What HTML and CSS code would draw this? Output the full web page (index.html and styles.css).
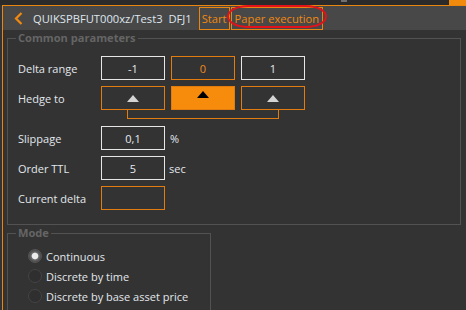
FILE: index.html
```html
<!DOCTYPE html>
<html>
<head>
<meta charset="utf-8">
<link rel="stylesheet" href="styles.css">
</head>
<body>
<div class="strip"><span class="nub"></span><span class="corner"></span></div>
<div class="window">
  <header class="bar">
    <svg class="back" width="9" height="13" viewBox="0 0 9 13"><polyline points="7.5,1 2,6.5 7.5,12" fill="none" stroke="#f0890f" stroke-width="2.2"/></svg>
    <span class="title">QUIKSPBFUT000xz/Test3&nbsp; DFJ1</span>
    <span class="tab tab-start">Start</span>
    <span class="tab tab-paper">Paper execution</span>
    <span class="ring"></span>
  </header>
  <div class="content">
    <fieldset class="group common">
      <legend>Common parameters</legend>
      <div class="rows">
        <div class="row">
          <span class="label">Delta range</span>
          <div class="fields">
            <span class="field">-1</span>
            <span class="field field-orange">0</span>
            <span class="field">1</span>
          </div>
        </div>
        <div class="hedge">
          <div class="row">
            <span class="label">Hedge to</span>
            <div class="fields">
              <span class="field field-frame"><span class="tri"></span></span>
              <span class="field field-fill"><span class="tri tri-dark"></span></span>
              <span class="field field-frame"><span class="tri"></span></span>
            </div>
          </div>
          <div class="bracket"></div>
        </div>
        <div class="row">
          <span class="label">Slippage</span>
          <span class="field">0,1</span>
          <span class="unit">%</span>
        </div>
        <div class="row">
          <span class="label">Order TTL</span>
          <span class="field">5</span>
          <span class="unit unit-sec">sec</span>
        </div>
        <div class="row">
          <span class="label">Current delta</span>
          <span class="field field-frame"></span>
        </div>
      </div>
    </fieldset>
    <fieldset class="group mode">
      <legend>Mode</legend>
      <div class="options">
        <div class="option"><span class="radio radio-on"></span>Continuous</div>
        <div class="option"><span class="radio"></span>Discrete by time</div>
        <div class="option"><span class="radio"></span>Discrete by base asset price</div>
      </div>
    </fieldset>
  </div>
</div>
</body>
</html>
```
FILE: styles.css
```css
html, body {
  margin: 0;
  padding: 0;
}
body {
  background: #333333;
  width: 466px;
  height: 310px;
  overflow: hidden;
  font-family: "Open Sans", "Noto Sans", sans-serif;
  font-size: 11px;
  color: #e2e7ec;
}
.strip {
  height: 5px;
  background: #2b2b2b;
  display: flex;
}
.nub {
  margin-left: 341px;
  width: 6px;
  height: 2px;
  background: #707070;
}
.corner {
  margin-left: auto;
  width: 17px;
  background: #f28b0c;
}
.window {
  margin-left: 2px;
  border-left: 1px solid #e8860f;
  border-top: 1px solid #e8860f;
  height: 304px;
}
.bar {
  position: relative;
  height: 24px;
  background: #484848;
  display: flex;
  align-items: center;
  padding-left: 11px;
}
.back {
  display: block;
  margin-top: 1px;
}
.title {
  margin-left: 10px;
  font-size: 11.2px;
  color: #dfe6ee;
}
.tab {
  align-self: flex-end;
  height: 23px;
  box-sizing: border-box;
  border: 1px solid #e8860f;
  color: #f0890f;
  font-size: 11.2px;
  display: flex;
  align-items: center;
  padding: 0 2px;
}
.tab-start {
  margin-left: 7px;
}
.tab-paper {
  margin-left: 1px;
  padding: 0 3px;
}
.ring {
  position: absolute;
  left: 224px;
  top: -1px;
  width: 100px;
  height: 23px;
  box-sizing: border-box;
  border: 2px solid #e3121a;
  border-radius: 22px / 12px;
}
.content {
  margin: 0 5px 0 4px;
}
.group {
  margin: 0;
  border: 1px solid #525252;
  padding: 0;
  min-width: 0;
}
.group legend {
  margin-left: 8px;
  padding: 0 2px;
  line-height: 16px;
  font-size: 11.1px;
  font-weight: 700;
  color: #656565;
}
.rows {
  display: flex;
  flex-direction: column;
  gap: 6px;
  padding: 10px 0 14px 10px;
}
.row {
  display: flex;
  align-items: center;
  height: 24px;
}
.label {
  width: 83px;
  flex: none;
}
.fields {
  display: flex;
  gap: 6px;
}
.field {
  width: 64px;
  height: 24px;
  box-sizing: border-box;
  border: 1px solid #e6e6e6;
  display: flex;
  align-items: center;
  justify-content: center;
  color: #e6ebf0;
}
.field-orange {
  border-color: #e37c0e;
  color: #ee8a1a;
}
.field-frame {
  border-color: #e37c0e;
}
.field-fill {
  border-color: #e37c0e;
  background: #f68b0c;
  align-items: flex-start;
  padding-top: 4px;
}
.tri {
  width: 0;
  height: 0;
  border-left: 6px solid transparent;
  border-right: 6px solid transparent;
  border-bottom: 7px solid #d4d4d4;
}
.tri-dark {
  border-bottom-color: #000;
}
.bracket {
  margin-left: 109px;
  width: 152px;
  height: 9px;
  box-sizing: border-box;
  border: 1px solid #e37c0e;
  border-top: none;
  margin-bottom: 1px;
}
.unit {
  margin-left: 5px;
}
.unit-sec {
  margin-left: 4px;
}
.mode {
  width: 204px;
  box-sizing: border-box;
  height: 90px;
}
.options {
  padding: 5px 0 0 20px;
}
.option {
  display: flex;
  align-items: center;
  height: 20px;
}
.radio {
  width: 14px;
  height: 14px;
  box-sizing: border-box;
  border-radius: 50%;
  border: 1px solid #444444;
  background: #2f2f2f;
  margin-right: 4px;
}
.radio-on {
  border-color: #555555;
  background: radial-gradient(circle, #ececec 0 2.8px, #6a6a6a 3.8px, #4a4a4a 6px);
}
```
